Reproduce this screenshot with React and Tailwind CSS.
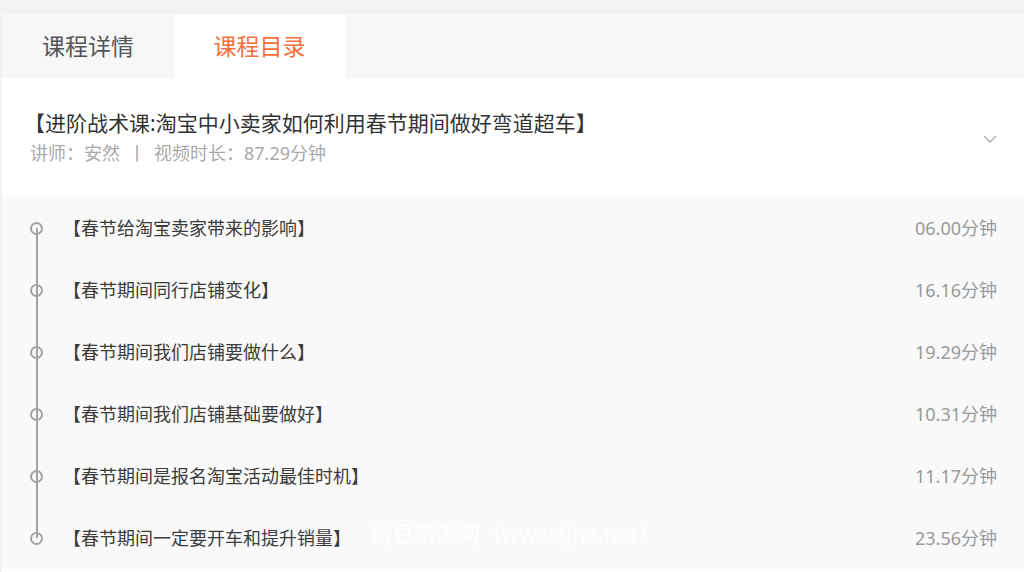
import React from 'react';

const lessons = [
  { title: '【春节给淘宝卖家带来的影响】', time: '06.00分钟' },
  { title: '【春节期间同行店铺变化】', time: '16.16分钟' },
  { title: '【春节期间我们店铺要做什么】', time: '19.29分钟' },
  { title: '【春节期间我们店铺基础要做好】', time: '10.31分钟' },
  { title: '【春节期间是报名淘宝活动最佳时机】', time: '11.17分钟' },
  { title: '【春节期间一定要开车和提升销量】', time: '23.56分钟' },
];

function Chevron() {
  return (
    <svg width="14" height="8" viewBox="0 0 14 8" fill="none" stroke="#aaaaaa" strokeWidth="1.3">
      <path d="M1 1l6 6 6-6" />
    </svg>
  );
}

export default function App() {
  return (
    <div
      className="w-[1024px] h-[572px] bg-[#f2f2f4] pt-[14px] pl-[2px] overflow-hidden"
      style={{ fontFamily: '"Noto Sans", "Noto Sans CJK SC", sans-serif' }}
    >
      <div className="bg-white h-full">
        {/* tabs */}
        <div className="flex h-[64px] bg-[#f7f7f8]">
          <div className="w-[172px] flex items-center justify-center text-[23px] text-[#555]">课程详情</div>
          <div className="w-[171px] flex items-center justify-center text-[23px] text-[#f66f3b] bg-white">课程目录</div>
        </div>

        {/* course header */}
        <div className="h-[119px] flex items-center justify-between pl-[28px] pr-[27px]">
          <div className="flex flex-col">
            <div className="text-[21px] leading-[28px] text-[#333] -ml-[6px]">【进阶战术课:淘宝中小卖家如何利用春节期间做好弯道超车】</div>
            <div className="mt-[3px] text-[18px] leading-[26px] text-[#aaa] flex items-center">
              <span>讲师：安然</span>
              <span className="mx-[8px]">丨</span>
              <span>视频时长：87.29分钟</span>
            </div>
          </div>
          <div className="mt-[2px]">
            <Chevron />
          </div>
        </div>

        {/* lesson list */}
        <div className="relative bg-[#f9f9f9]">
          <div className="absolute left-[34px] top-[31px] bottom-[31px] w-[2px] bg-[#a3a3a3]" />
          {lessons.map((l, i) => (
            <div key={i} className="h-[62px] flex items-center pr-[27px]">
              <div className="w-[66px] flex justify-start pl-[28px]">
                <div className="w-[13px] h-[13px] rounded-full border-2 border-[#a3a3a3] bg-[#f9f9f9]" />
              </div>
              <div className="flex-1 text-[18px] text-[#3c3c3c] -ml-[5px]">{l.title}</div>
              <div className="text-[18px] text-[#999]">{l.time}</div>
            </div>
          ))}
          <div className="absolute left-[368px] bottom-[19px] text-[22px] text-white/80 pointer-events-none">
            柯豆资源网（www.fjha.net）
          </div>
        </div>
      </div>
    </div>
  );
}
